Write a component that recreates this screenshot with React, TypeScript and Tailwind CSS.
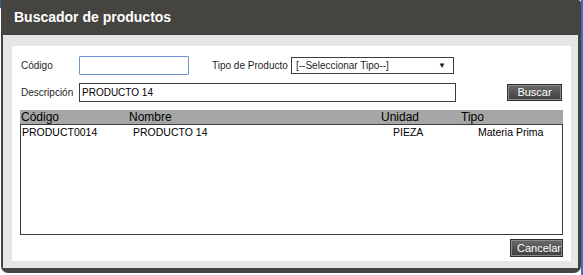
const font = "font-['Liberation_Sans',Arial,sans-serif]";

const productos = [
  { codigo: "PRODUCT0014", nombre: "PRODUCTO 14", unidad: "PIEZA", tipo: "Materia Prima" },
];

function DarkButton({ label, className }: { label: string; className?: string }) {
  return (
    <button
      className={`h-[17px] border border-[#2e2e2e] bg-gradient-to-b from-[#6a6a6a] to-[#3f3f3f] shadow-[inset_0_0_0_1px_#8a8a8a] text-[11px] text-white leading-none px-[6px] ${className ?? ""}`}
    >
      {label}
    </button>
  );
}

export default function App() {
  return (
    <div className={`w-[583px] h-[275px] bg-white flex ${font}`}>
      <div className="w-[1px] flex flex-col">
        <div className="h-[8px] bg-[#2f5f9e]" />
      </div>
      <div className="w-[580px] h-[273px] bg-[#454441] rounded-b-[7px] rounded-tr-[3px] flex flex-col pl-[2px] pr-[3px] pb-[5px]">
        <div className="h-[35px] flex items-center pl-[11px] text-white font-bold text-[14px]">
          Buscador de productos
        </div>
        <div className="flex-1 bg-[#e6e6e6] pl-[9px] pr-[7px] pt-[11px] pb-[7px] flex">
          <div className="flex-1 bg-white flex flex-col">
            {/* fila 1 */}
            <div className="flex items-center pl-[9px] pt-[10px] text-[10px] text-[#1e1e1e]">
              <span className="w-[58px]">Código</span>
              <input className="w-[110px] h-[19px] border border-[#6f93d2] rounded-[1px] outline-none text-[10px] px-[3px]" />
              <span className="ml-[23px] w-[79px]">Tipo de Producto</span>
              <div className="w-[163px] h-[17px] border border-[#3c3c3c] flex items-center justify-between pl-[4px] pr-[7px]">
                <span>[--Seleccionar Tipo--]</span>
                <span className="text-[8px] leading-none">▼</span>
              </div>
            </div>
            {/* fila 2 */}
            <div className="flex items-center pl-[9px] pt-[8px] text-[10px] text-[#1e1e1e]">
              <span className="w-[58px]">Descripción</span>
              <div className="w-[377px] h-[19px] border border-[#3c3c3c] flex items-center px-[2px] text-black">
                PRODUCTO 14
              </div>
              <DarkButton label="Buscar" className="ml-[51px] w-[55px]" />
            </div>
            {/* tabla */}
            <div className="ml-[8px] mt-[8px] w-[543px]">
              <div className="h-[14px] bg-[#a6a6a6] grid grid-cols-[108px_252px_80px_1fr] pl-[1px] items-center text-[12px] leading-none text-black">
                <span>Código</span>
                <span>Nombre</span>
                <span>Unidad</span>
                <span>Tipo</span>
              </div>
              <div className="h-[111px] border border-[#3c3c3c] pt-[1px]">
                {productos.map((p) => (
                  <div
                    key={p.codigo}
                    className="grid grid-cols-[111px_260px_85px_1fr] pl-[1px] text-[10.5px] leading-[13px] text-black"
                  >
                    <span>{p.codigo}</span>
                    <span>{p.nombre}</span>
                    <span>{p.unidad}</span>
                    <span>{p.tipo}</span>
                  </div>
                ))}
              </div>
            </div>
            <div className="flex justify-end pr-[8px] mt-[4px]">
              <DarkButton label="Cancelar" className="w-[53px] h-[18px]" />
            </div>
          </div>
        </div>
      </div>
      <div className="w-[2px] h-full bg-[#3d6fc2]" />
    </div>
  );
}
